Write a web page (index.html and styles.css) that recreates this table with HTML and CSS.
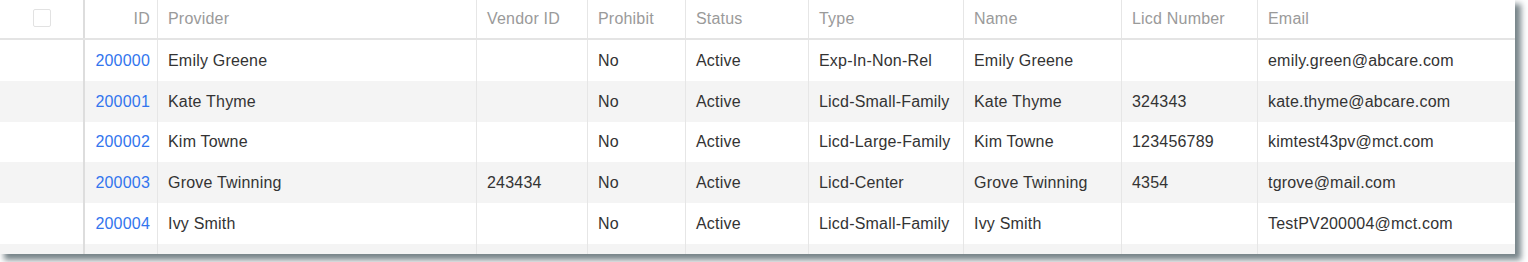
FILE: index.html
```html
<!DOCTYPE html>
<html lang="en">
<head>
<meta charset="utf-8">
<title>Providers</title>
<link rel="stylesheet" href="styles.css">
</head>
<body>
<div class="card">
  <div class="row head">
    <div class="cell check"><span class="box"></span></div>
    <div class="cell num">ID</div>
    <div class="cell">Provider</div>
    <div class="cell">Vendor ID</div>
    <div class="cell">Prohibit</div>
    <div class="cell">Status</div>
    <div class="cell">Type</div>
    <div class="cell">Name</div>
    <div class="cell">Licd Number</div>
    <div class="cell last">Email</div>
  </div>
  <div class="row">
    <div class="cell check"></div>
    <div class="cell num"><a class="link" href="#">200000</a></div>
    <div class="cell">Emily Greene</div>
    <div class="cell"></div>
    <div class="cell">No</div>
    <div class="cell">Active</div>
    <div class="cell">Exp-In-Non-Rel</div>
    <div class="cell">Emily Greene</div>
    <div class="cell"></div>
    <div class="cell last">emily.green@abcare.com</div>
  </div>
  <div class="row alt">
    <div class="cell check"></div>
    <div class="cell num"><a class="link" href="#">200001</a></div>
    <div class="cell">Kate Thyme</div>
    <div class="cell"></div>
    <div class="cell">No</div>
    <div class="cell">Active</div>
    <div class="cell">Licd-Small-Family</div>
    <div class="cell">Kate Thyme</div>
    <div class="cell">324343</div>
    <div class="cell last">kate.thyme@abcare.com</div>
  </div>
  <div class="row">
    <div class="cell check"></div>
    <div class="cell num"><a class="link" href="#">200002</a></div>
    <div class="cell">Kim Towne</div>
    <div class="cell"></div>
    <div class="cell">No</div>
    <div class="cell">Active</div>
    <div class="cell">Licd-Large-Family</div>
    <div class="cell">Kim Towne</div>
    <div class="cell">123456789</div>
    <div class="cell last">kimtest43pv@mct.com</div>
  </div>
  <div class="row alt">
    <div class="cell check"></div>
    <div class="cell num"><a class="link" href="#">200003</a></div>
    <div class="cell">Grove Twinning</div>
    <div class="cell">243434</div>
    <div class="cell">No</div>
    <div class="cell">Active</div>
    <div class="cell">Licd-Center</div>
    <div class="cell">Grove Twinning</div>
    <div class="cell">4354</div>
    <div class="cell last">tgrove@mail.com</div>
  </div>
  <div class="row">
    <div class="cell check"></div>
    <div class="cell num"><a class="link" href="#">200004</a></div>
    <div class="cell">Ivy Smith</div>
    <div class="cell"></div>
    <div class="cell">No</div>
    <div class="cell">Active</div>
    <div class="cell">Licd-Small-Family</div>
    <div class="cell">Ivy Smith</div>
    <div class="cell"></div>
    <div class="cell last">TestPV200004@mct.com</div>
  </div>
  <div class="row alt">
    <div class="cell check"></div>
    <div class="cell num"></div>
    <div class="cell"></div>
    <div class="cell"></div>
    <div class="cell"></div>
    <div class="cell"></div>
    <div class="cell"></div>
    <div class="cell"></div>
    <div class="cell"></div>
    <div class="cell last"></div>
  </div>
</div>
</body>
</html>
```

FILE: styles.css
```css
html, body {
  margin: 0;
  padding: 0;
  background: #ffffff;
}

body {
  padding-bottom: 8px;
  font-family: "Liberation Sans", Arial, sans-serif;
  font-size: 16px;
  letter-spacing: 0.2px;
  color: #333333;
}

.card {
  width: 1515px;
  height: 254px;
  overflow: hidden;
  background: #ffffff;
  box-shadow: 5px 5px 6px 1px rgba(95, 110, 116, 0.85);
}

.row {
  display: grid;
  grid-template-columns: 85px 73px 319px 111px 98px 123px 155px 158px 136px 257px;
  height: 40.75px;
  background: #ffffff;
}

.row.alt {
  background: #f4f4f4;
}

.row.head {
  height: 38px;
  border-bottom: 2px solid #e4e4e4;
  color: #9a9a9a;
}

.cell {
  display: flex;
  align-items: center;
  padding: 1px 8px 0 10px;
  border-right: 1px solid #e6e6e6;
  white-space: nowrap;
  overflow: hidden;
}

.head .cell {
  padding-top: 0;
}

.cell.check {
  border-right: 2px solid #dddddd;
  justify-content: center;
  padding: 0;
}

.cell.num {
  justify-content: flex-end;
  padding-right: 7px;
}

.cell.last {
  border-right: none;
}

.box {
  width: 16px;
  height: 16px;
  border: 1px solid #e2e2e2;
  border-radius: 2px;
  background: #ffffff;
  margin-top: -2px;
}

.link {
  color: #3275ee;
  text-decoration: none;
}
```
